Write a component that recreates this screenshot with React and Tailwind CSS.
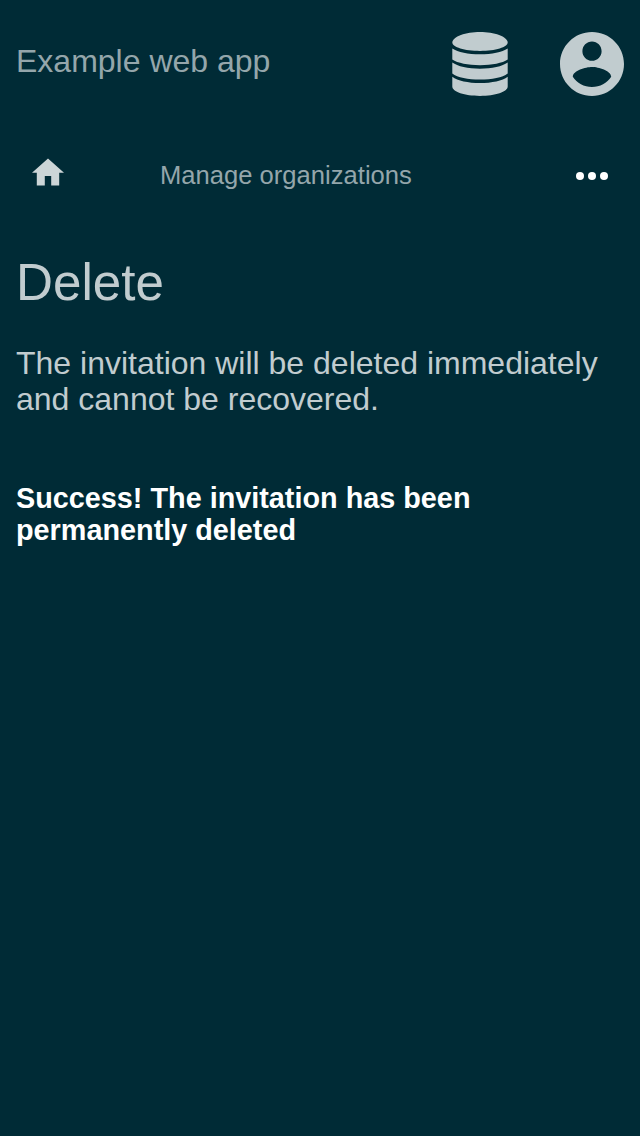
function DatabaseIcon() {
  return (
    <svg className="h-16 w-16" viewBox="0 0 64 64" fill="currentColor" aria-hidden="true">
      <path d="M32 0C46 0 59.7 4.6 59.7 10.6C59.7 15.2 47.5 19 32 19S4.3 15.2 4.3 10.6C4.3 4.6 18 0 32 0Z" />
      <path d="M4.3 16.5C10 20.1 20 22.3 32 22.3S54 20.1 59.7 16.5V27.6C54.5 31.2 44 33.2 32 33.2S9.5 31.2 4.3 27.6Z" />
      <path d="M4.3 30.6C9.5 34.4 20 36.8 32 36.8S54.5 34.4 59.7 30.6V41.4C54.5 45.4 44 47.5 32 47.5S9.5 45.4 4.3 41.4Z" />
      <path d="M4.3 44.7C9.5 48.7 20 51 32 51S54.5 48.7 59.7 44.7V54.6C59.7 59.8 47.3 64 32 64S4.3 59.8 4.3 54.6Z" />
    </svg>
  );
}

function AccountIcon() {
  return (
    <svg className="h-16 w-16" viewBox="2 2 20 20" fill="currentColor" aria-hidden="true">
      <path d="M12 2C6.48 2 2 6.48 2 12s4.48 10 10 10 10-4.48 10-10S17.52 2 12 2zm0 3c1.66 0 3 1.34 3 3s-1.34 3-3 3-3-1.34-3-3 1.34-3 3-3zm0 14.2c-2.5 0-4.71-1.28-6-3.22.03-1.99 4-3.08 6-3.08 1.99 0 5.97 1.09 6 3.08-1.29 1.94-3.5 3.22-6 3.22z" />
    </svg>
  );
}

function HomeIcon() {
  return (
    <svg className="mb-2 h-8 w-8 text-[#ccd5d7]" viewBox="2 1.5 20 20" fill="currentColor" aria-hidden="true">
      <path d="M10 20v-6h4v6h5v-8h3L12 3 2 12h3v8z" />
    </svg>
  );
}

function MoreIcon() {
  return (
    <svg className="h-8 w-8 text-white" viewBox="0 0 32 32" fill="currentColor" aria-hidden="true">
      <circle cx="4" cy="16" r="4" />
      <circle cx="16" cy="16" r="4" />
      <circle cx="28" cy="16" r="4" />
    </svg>
  );
}

export default function App() {
  return (
    <div className="min-h-screen bg-[#002b36] font-['Liberation_Sans',Arial,sans-serif] text-[#c1cccf]">
      <header className="flex h-32 items-center justify-between px-4">
        <span className="pb-1.5 text-[32px] leading-9 text-[#94a6ab]">Example web app</span>
        <div className="flex gap-12">
          <DatabaseIcon />
          <AccountIcon />
        </div>
      </header>
      <nav className="flex h-24 items-center px-8">
        <HomeIcon />
        <span className="ml-24 flex-1 pb-0.5 text-[25.6px] leading-8 text-[#94a6ab]">
          Manage organizations
        </span>
        <MoreIcon />
      </nav>
      <main className="px-4">
        <h1 className="pt-[30px] text-[51.2px] leading-[58px]">Delete</h1>
        <p className="mt-[33px] text-[32px] leading-9">
          The invitation will be deleted immediately and cannot be recovered.
        </p>
        <p className="mt-[65px] w-[520px] text-[28.8px] leading-8 font-bold text-white">
          Success! The invitation has been permanently deleted
        </p>
      </main>
    </div>
  );
}
